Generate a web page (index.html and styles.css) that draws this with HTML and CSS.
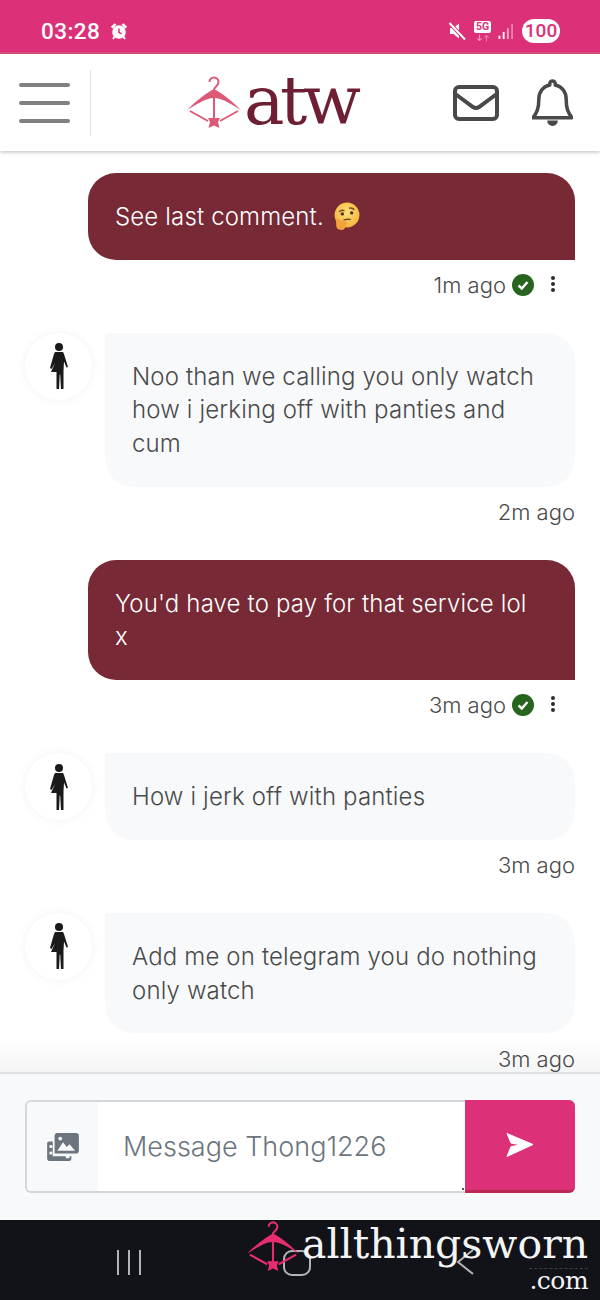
FILE: index.html
```html
<!DOCTYPE html>
<html lang="en">
<head>
<meta charset="utf-8">
<title>Messages</title>
<link rel="stylesheet" href="styles.css">
</head>
<body>
<div class="page">
  <div class="status">
    <div class="status-left">
      <span class="time">03:28</span>
      <svg class="alarm" viewBox="0 0 18 18"><circle cx="9" cy="10" r="6.800" fill="#fff"/><path d="M.8 4.800 4.600 1.200 6.400 2.800 2.600 6.600zM17.200 4.800 13.400 1.200 11.600 2.800 15.400 6.600z" fill="#fff"/><path d="M4.600 14.500 3 17M13.400 14.500 15 17" stroke="#fff" stroke-width="1.800"/><path d="M9 6.500v4l2.600 1.400" fill="none" stroke="#dc3078" stroke-width="1.500"/></svg>
    </div>
    <div class="status-right">
      <svg class="mute" viewBox="0 0 18 18"><path d="M2 6h3.500L11 1.500v15L5.500 12H2z" fill="#fff"/><path d="M1.500 1 17 17.500" stroke="#dc3078" stroke-width="3.800"/><path d="M1.500 1 17 17.500" stroke="#fff" stroke-width="2"/></svg>
      <div class="net">
        <span class="net-5g">5G</span>
        <svg class="net-arrows" viewBox="0 0 16 8"><path d="M4 0v7M1.500 4.500 4 7l2.500-2.500" fill="none" stroke="#f59cc0" stroke-width="1.200"/><path d="M12 8V1M9.500 3.500 12 1l2.500 2.500" fill="none" stroke="#ee7fac" stroke-width="1.200"/></svg>
      </div>
      <svg class="signal" viewBox="0 0 16 16"><rect x="0" y="12.500" width="2" height="3.500" fill="#fff"/><rect x="4.500" y="8.500" width="2" height="7.500" fill="#fff"/><rect x="9" y="4.500" width="2" height="11.500" fill="#f6a8c8"/><rect x="13.500" y="0" width="2" height="16" fill="#ee7fac"/></svg>
      <span class="battery">100</span>
    </div>
  </div>

  <header class="topbar">
    <div class="burger-cell">
      <div class="burger"><span></span><span></span><span></span></div>
    </div>
    <div class="logo">
      <svg class="logo-hanger" viewBox="0 0 54 54">
        <path d="M27 16c-1-2.500 4.500-3.500 4.500-8a4.500 4.500 0 0 0-9 0" fill="none" stroke="#dc5a78" stroke-width="2"/>
        <path d="M0 36C9 27 19 19 27 15c8 4 18 12 27 21-9-5-18-12-27-12S9 31 0 36z" fill="#dc5a78"/>
        <path d="M3 37 21 47M51 37 33 47M27 22v26" fill="none" stroke="#dc5a78" stroke-width="2"/>
        <path d="M21 44h12l-2 4 1.500 6-5.500-2.500-5.500 2.500 1.500-6z" fill="#dc5a78"/>
      </svg>
      <span class="logo-text">atw</span>
    </div>
    <div class="top-actions">
      <svg class="icon-mail" viewBox="0 0 46 36"><rect x="2" y="2" width="42" height="32" rx="4" fill="none" stroke="#494949" stroke-width="4"/><path d="M3 9.500 20 22q3 2 6 0L43 9.500" fill="none" stroke="#494949" stroke-width="4"/></svg>
      <svg class="icon-bell" viewBox="0 0 42 48"><path d="M21 1.500a2.800 2.800 0 0 1 2.800 2.800v1.200C31 7 35 13 35 20c0 10 2 14 6 19H1c4-5 6-9 6-19 0-7 4-13 11.200-14.500V4.300A2.800 2.800 0 0 1 21 1.500z" fill="none" stroke="#494949" stroke-width="3.600" stroke-linejoin="round"/><path d="M15.500 42h11a5.500 5.500 0 0 1-11 0z" fill="#494949"/></svg>
    </div>
  </header>

  <main class="chat">
    <div class="msg sent">
      <div class="bubble">See last comment. <svg class="emoji" viewBox="0 0 28 28"><defs><radialGradient id="face" cx="50%" cy="40%" r="60%"><stop offset="0" stop-color="#fde07a"/><stop offset="1" stop-color="#f5b53d"/></radialGradient></defs><circle cx="14.500" cy="12.500" r="12" fill="url(#face)"/><path d="M7 9.500q2.500-2.500 5-1M16.500 6q3-1 5 1.500" fill="none" stroke="#7a4a1a" stroke-width="1.500"/><circle cx="10" cy="11.500" r="1.600" fill="#4a2f14"/><circle cx="19" cy="10.500" r="1.600" fill="#4a2f14"/><path d="M11 17.500q4-1.500 7-.5" fill="none" stroke="#7a4a1a" stroke-width="1.500"/><path d="M4 18q0-3 3-1l6 2q3 1 1 3l-1 1q0 4-4 4-5 0-5-5z" fill="#f2a33a"/></svg></div>
      <div class="meta">
        <span>1m ago</span>
        <svg class="tick" viewBox="0 0 22 22"><circle cx="11" cy="11" r="11" fill="#27651f"/><path d="M6.500 11.500 9.800 14.500 15.500 8" fill="none" stroke="#fff" stroke-width="2.400"/></svg>
        <span class="kebab"><i></i><i></i><i></i></span>
      </div>
    </div>

    <div class="msg received">
      <div class="row">
        <div class="avatar"><svg class="figure" viewBox="0 0 20 46"><use href="#woman"/></svg></div>
        <div class="bubble">Noo than we calling you only watch how i jerking off with panties and cum</div>
      </div>
      <div class="meta"><span>2m ago</span></div>
    </div>

    <div class="msg sent">
      <div class="bubble">You'd have to pay for that service lol x</div>
      <div class="meta">
        <span>3m ago</span>
        <svg class="tick" viewBox="0 0 22 22"><circle cx="11" cy="11" r="11" fill="#27651f"/><path d="M6.500 11.500 9.800 14.500 15.500 8" fill="none" stroke="#fff" stroke-width="2.400"/></svg>
        <span class="kebab"><i></i><i></i><i></i></span>
      </div>
    </div>

    <div class="msg received">
      <div class="row">
        <div class="avatar"><svg class="figure" viewBox="0 0 20 46"><use href="#woman"/></svg></div>
        <div class="bubble">How i jerk off with panties</div>
      </div>
      <div class="meta"><span>3m ago</span></div>
    </div>

    <div class="msg received">
      <div class="row">
        <div class="avatar"><svg class="figure" viewBox="0 0 20 46"><use href="#woman"/></svg></div>
        <div class="bubble">Add me on telegram you do nothing only watch</div>
      </div>
      <div class="meta"><span>3m ago</span></div>
    </div>
    <div class="chat-fade"></div>
  </main>

  <div class="composer">
    <div class="input-group">
      <div class="attach">
        <svg class="attach-icon" viewBox="0 0 34 30"><path d="M10 0h21a3 3 0 0 1 3 3v16a3 3 0 0 1-3 3H8V3a3 3 0 0 1 2-3z" fill="#6c757d"/><path d="M11 19l6-9 4 5 3-3 6 7z" fill="#f8f9fa"/><circle cx="14" cy="6" r="2" fill="#f8f9fa"/><path d="M2 9h4v16h20v2a3 3 0 0 1-3 3H3a3 3 0 0 1-3-3V11a2 2 0 0 1 2-2z" fill="#6c757d"/><rect x="2.500" y="13" width="3" height="3" fill="#f8f9fa"/><rect x="2.500" y="20" width="3" height="3" fill="#f8f9fa"/><rect x="20" y="24" width="4" height="3" fill="#f8f9fa"/></svg>
      </div>
      <div class="field">Message Thong1226</div>
      <div class="send">
        <svg class="send-icon" viewBox="0 0 28 24"><path d="M1 .500 27 11.500 1 23.500 5 13.500 15 12 5 10z" fill="#fff" stroke="#fff" stroke-linejoin="round"/></svg>
      </div>
    </div>
  </div>

  <nav class="navbar">
    <div class="nav-recent"><span></span><span></span><span></span></div>
    <div class="nav-home"></div>
    <svg class="nav-back" viewBox="0 0 20 30"><path d="M18 3 3 15l15 12" fill="none" stroke="#b4b4b6" stroke-width="2"/></svg>
    <div class="watermark">
      <svg class="wm-hanger" viewBox="0 0 54 54">
        <path d="M27 16c-1-2.500 4.500-3.500 4.500-8a4.500 4.500 0 0 0-9 0" fill="none" stroke="#e72d6e" stroke-width="2.200"/>
        <path d="M0 36C9 27 19 19 27 15c8 4 18 12 27 21-9-5-18-12-27-12S9 31 0 36z" fill="#e72d6e"/>
        <path d="M3 37 21 47M51 37 33 47M27 22v26" fill="none" stroke="#e72d6e" stroke-width="2.200"/>
        <path d="M21 44h12l-2 4 1.500 6-5.500-2.500-5.500 2.500 1.500-6z" fill="#e72d6e"/>
      </svg>
      <div class="wm-text">
        <span class="wm-name">allthingsworn</span>
        <span class="wm-com">.com</span>
      </div>
    </div>
  </nav>
</div>
<svg class="defs" width="0" height="0"><defs><g id="woman"><circle cx="10" cy="4" r="4" fill="#1a1a1a"/><path d="M6 9h8l1 2 4 13-1.500 .500-2.500-6-.5 9v19h-2.500l-.8-15h-.5l-.7 15H7.500V29H2l4-9-3.500 6L1 25 5 11z" fill="#1a1a1a"/></g></defs></svg>
</body>
</html>
```

FILE: styles.css
```css
* { box-sizing: border-box; }
html, body { margin: 0; padding: 0; }
body { font-family: Inter, "Liberation Sans", sans-serif; background: #fff; }
.defs { position: absolute; }
.page { width: 600px; height: 1300px; display: flex; flex-direction: column; overflow: hidden; position: relative; }

.status { height: 54px; flex: none; background: #dc3078; border-bottom: 2px solid #de4f7b; display: flex; justify-content: space-between; align-items: center; padding: 10px 40px 0 41px; color: #fff; }
.status-left, .status-right { display: flex; align-items: center; }
.time { font: 500 22.500px Roboto, sans-serif; letter-spacing: .4px; }
.alarm { width: 18px; height: 18px; margin-left: 10px; }
.mute { width: 18px; height: 18px; margin-right: 8px; }
.net { display: flex; flex-direction: column; align-items: center; width: 17px; margin-right: 7px; }
.net-5g { background: #fff; color: #dc3078; font: 700 10.500px/12px Roboto, sans-serif; width: 17px; text-align: center; border-radius: 2px; }
.net-arrows { width: 14px; height: 8px; margin-top: 1px; }
.signal { width: 16px; height: 15px; margin-right: 8px; }
.battery { background: #fff; color: #dc3078; font: 500 19px/24px Roboto, sans-serif; width: 38px; height: 24px; border-radius: 12px; text-align: center; }

.topbar { height: 97px; flex: none; background: #fff; display: flex; align-items: center; box-shadow: 0 1px 4px rgba(0,0,0,.28); position: relative; z-index: 2; }
.burger-cell { width: 91px; height: 66px; border-right: 1px solid #e4e4e4; display: flex; align-items: center; padding-left: 19px; flex: none; }
.burger { width: 51px; display: flex; flex-direction: column; gap: 14px; }
.burger span { display: block; height: 4px; border-radius: 2px; background: #808080; }
.logo { display: flex; align-items: center; margin-left: 96px; margin-top: -4px; }
.logo-hanger { width: 54px; height: 54px; }
.logo-text { font: 400 68px/70px "DejaVu Serif", serif; color: #6e1f33; margin-left: 3px; letter-spacing: -4.500px; }
.top-actions { display: flex; align-items: center; margin-left: auto; padding-right: 27px; gap: 33px; }
.icon-mail { width: 46px; height: 36px; }
.icon-bell { width: 41px; height: 48px; }

.chat { flex: 1; min-height: 0; padding: 22px 25px 0; display: flex; flex-direction: column; gap: 30.700px; overflow: hidden; position: relative; }
.msg { position: relative; z-index: 1; }
.bubble { font-size: 24px; line-height: 33.600px; font-weight: 300; letter-spacing: .15px; padding: 27px 27px 26px; border-radius: 28px; }
.sent .bubble { margin-left: 63px; padding-right: 40px; background: #772936; color: #fff; border-bottom-right-radius: 0; }
.emoji { width: 29px; height: 29px; vertical-align: -6px; margin-left: 1px; }
.row { display: flex; align-items: flex-start; gap: 13px; }
.avatar { width: 67px; height: 67px; border-radius: 50%; background: #fff; box-shadow: 0 0 10px rgba(0,0,0,.06); display: flex; align-items: center; justify-content: center; flex: none; }
.figure { width: 20px; height: 46px; }
.received .bubble { flex: 1; background: #f8f9fa; color: #4a4a4a; border-top-left-radius: 0; }
.meta { display: flex; justify-content: flex-end; align-items: center; height: 34px; margin-top: 8.500px; color: #4a4a4a; font-size: 22px; font-weight: 300; gap: 6px; }
.tick { width: 22px; height: 22px; }
.kebab { display: flex; flex-direction: column; gap: 2px; width: 20px; align-items: center; margin: -3px 12px 0 3px; }
.kebab i { display: block; width: 4px; height: 4px; border-radius: 50%; background: #2c2c2c; }
.chat-fade { position: absolute; left: 0; right: 0; bottom: 0; height: 34px; background: linear-gradient(to bottom, rgba(248,249,250,0), rgba(240,241,242,.75)); pointer-events: none; }

.composer { height: 148px; flex: none; background: #f8f9fa; border-top: 2px solid #dfe1e3; padding: 26px 25px 0; }
.input-group { height: 93px; display: flex; border: 2px solid #d5d8da; border-radius: 6px; background: #fff; position: relative; }
.input-group::after { content: ""; position: absolute; left: 435px; bottom: 1px; width: 2px; height: 2px; background: #555; }
.attach { width: 71px; background: #f8f9fa; display: flex; align-items: center; justify-content: center; border-radius: 5px 0 0 5px; }
.attach-icon { width: 34px; height: 28px; }
.field { flex: 1; padding: 0 24px 0 25px; display: flex; align-items: center; font-size: 27px; font-weight: 300; color: #6c757d; }
.send { width: 110px; margin: -2px -2px -2px 0; background: #dc3078; border-bottom: 3px solid #bb2a52; border-radius: 0 6px 6px 0; display: flex; align-items: center; justify-content: center; }
.send-icon { width: 28px; height: 24px; }

.navbar { height: 80px; flex: none; background: #121318; position: relative; }
.nav-recent { position: absolute; left: 117px; top: 30px; display: flex; gap: 9px; }
.nav-recent span { display: block; width: 2px; height: 25px; background: #b4b4b6; }
.nav-home { position: absolute; left: 283px; top: 30px; width: 28px; height: 26px; border: 2px solid #b4b4b6; border-radius: 9px; }
.nav-back { position: absolute; left: 455px; top: 27px; width: 20px; height: 30px; }
.watermark { position: absolute; left: 247px; top: -2px; display: flex; align-items: flex-start; }
.wm-hanger { width: 52px; height: 54px; }
.wm-text { display: flex; flex-direction: column; align-items: flex-end; margin-left: 3px; margin-top: 4px; }
.wm-name { font: 400 41px/44px "DejaVu Serif", serif; color: #f4f4f4; }
.wm-com { font: 400 25px/24px "DejaVu Serif", serif; color: #f4f4f4; letter-spacing: -.5px; border-top: 1px dashed #3c3d41; margin-top: 2px; }
```
